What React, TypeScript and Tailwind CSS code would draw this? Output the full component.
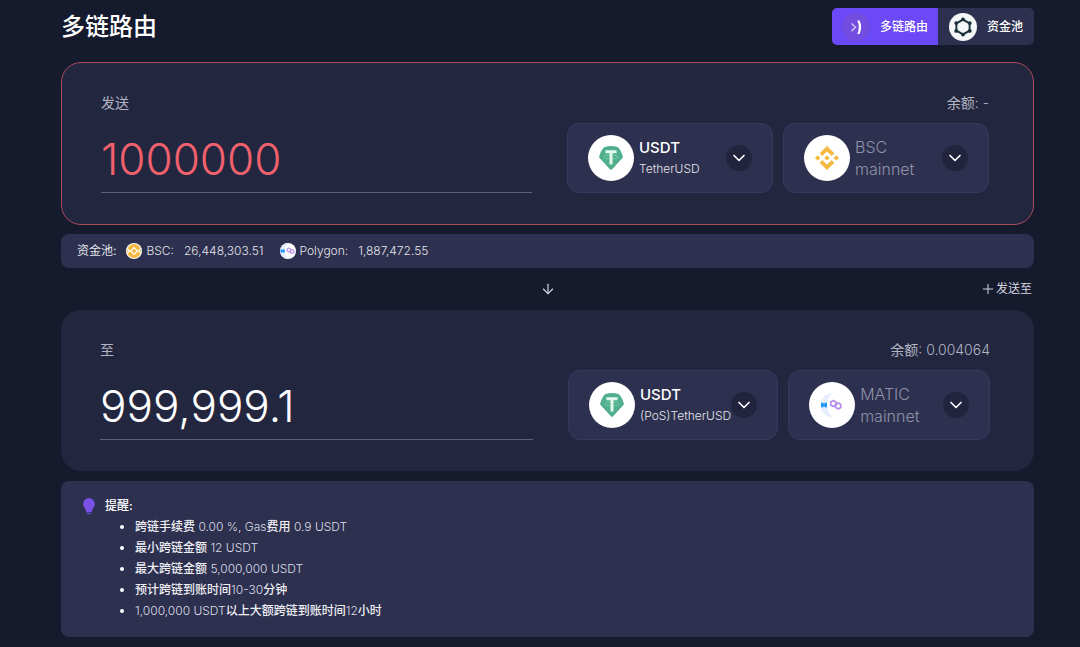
import { useState } from "react";
import type { ReactNode } from "react";
import { ArrowDown, ChevronDown, Plus } from "lucide-react";

function TetherIcon({ className }: { className?: string }) {
  return (
    <svg viewBox="0 0 24 24" className={className} aria-hidden="true">
      <path d="M5 1.2Q12 -1 19 1.2Q22.5 4.5 23.8 10.2Q24 11.4 23.2 12.3L12.9 23.4Q12 24.2 11.1 23.4L0.8 12.3Q0 11.4 0.2 10.2Q1.5 4.5 5 1.2Z" fill="#4fae8c" />
      <ellipse cx="12" cy="11" rx="7.4" ry="2" fill="none" stroke="#7fd0b4" strokeWidth="0.8" />
      <path d="M6.4 4.2h11.2v3h-4.1v11.3h-3V7.2H6.4z" fill="#e4f7ef" />
    </svg>
  );
}

function BnbIcon({ className }: { className?: string }) {
  return (
    <svg viewBox="0 0 126.6 126.6" className={className} fill="#f5b942" aria-hidden="true">
      <path d="M38.7 53.2 63.3 28.6l24.6 24.6 14.3-14.3L63.3 0 24.4 38.9z" />
      <path d="M0 63.3 14.3 49l14.3 14.3-14.3 14.3z" />
      <path d="M38.7 73.4 63.3 98l24.6-24.6 14.3 14.3-38.9 38.9-38.9-38.9z" />
      <path d="M98 63.3 112.3 49l14.3 14.3-14.3 14.3z" />
      <path d="M77.8 63.3 63.3 48.8 48.8 63.3l14.5 14.5z" />
    </svg>
  );
}

// Round badge version used in the liquidity bar
function BnbBadge() {
  return (
    <svg viewBox="0 0 16 16" className="size-4" aria-hidden="true">
      <circle cx="8" cy="8" r="8" fill="#fff" />
      <circle cx="8" cy="8" r="7" fill="#f5b942" />
      <g fill="none" stroke="#fff" strokeWidth="1.1">
        <path d="M8 4.6 11.4 8 8 11.4 4.6 8z" />
        <path d="M1 5.4 3.6 8 1 10.6M15 5.4 12.4 8l2.6 2.6" />
      </g>
    </svg>
  );
}

function MaticIcon({ className }: { className?: string }) {
  return (
    <svg viewBox="0 0 24 24" className={className} aria-hidden="true">
      <path d="M12.5 0A12 12 0 0 0 12.5 24A16 16 0 0 1 12.5 0Z" fill="#e6edff" />
      <path d="M1 9.8h6v4.4H1z" fill="#6cc3fb" />
      <path d="M1 9.8h1.6l1.4 1.6 1.4-1.6H7v4.4H5.4L4 12.8l-1.4 1.4H1z" fill="#2196f3" />
      <g fill="none" stroke="#b48be8" strokeWidth="1.7" strokeLinejoin="round">
        <path d="M13.3 7.6l2.6 1.5v3l-2.6 1.5-2.6-1.5v-3z" />
        <path d="M18.2 9.9l2.6 1.5v3l-2.6 1.5-2.6-1.5v-3z" />
      </g>
    </svg>
  );
}

function BridgeIcon() {
  return (
    <svg viewBox="0 0 28 28" className="size-7" fill="none" aria-hidden="true">
      <circle cx="14" cy="14" r="14" fill="#734ce0" />
      <path d="M9.5 10.5l4 3.8-4 3.8" stroke="#cfc3f7" strokeWidth="1.5" />
      <path d="M15.3 7.5h2.2q3.4 6.5 0 13.4h-2.2q3-6.8 0-13.4z" fill="#fff" />
    </svg>
  );
}

function PoolIcon() {
  return (
    <svg viewBox="0 0 28 28" className="size-7" fill="none" aria-hidden="true">
      <circle cx="14" cy="14" r="14" fill="#f5f6f8" />
      <path d="M14 6.6l6.6 3.7v7.4L14 21.4l-6.6-3.7v-7.4z" stroke="#17303b" strokeWidth="1.9" />
      <g fill="#17303b">
        <circle cx="14" cy="6.4" r="1.9" />
        <circle cx="20.8" cy="10.1" r="1.9" />
        <circle cx="20.8" cy="17.9" r="1.9" />
        <circle cx="14" cy="21.6" r="1.9" />
        <circle cx="7.2" cy="17.9" r="1.9" />
        <circle cx="7.2" cy="10.1" r="1.9" />
      </g>
    </svg>
  );
}

function BulbIcon() {
  return (
    <svg viewBox="0 0 12 17" className="h-[17px] w-3" fill="#7a50e6" aria-hidden="true">
      <path d="M6 0a5.8 5.8 0 0 0-5.8 5.8c0 3.2 2.4 4.6 3.2 8.4h5.2c.8-3.8 3.2-5.2 3.2-8.4A5.8 5.8 0 0 0 6 0z" />
      <path d="M3.6 15.2h4.8v.9H3.6z" />
    </svg>
  );
}

type PickerProps = {
  icon: ReactNode;
  children: ReactNode;
};

function Picker({ icon, children }: PickerProps) {
  return (
    <button
      type="button"
      aria-haspopup="dialog"
      className="flex h-[70px] items-center gap-[5px] rounded-xl border border-[#353a60] bg-[#2d304f] px-5 text-left whitespace-nowrap hover:bg-[#33375a]"
    >
      <span className="flex size-[46px] shrink-0 items-center justify-center rounded-full bg-white">{icon}</span>
      <span className="flex flex-1 flex-col">{children}</span>
      <span className="-ml-[5px] flex size-[26px] shrink-0 items-center justify-center rounded-full bg-[#21243c]">
        <ChevronDown className="size-5 text-white" strokeWidth={2} />
      </span>
    </button>
  );
}

type PanelProps = {
  id: string;
  label: string;
  value: string;
  onChange?: (value: string) => void;
  balance: string;
  token: string;
  chain: string;
  chainIcon: ReactNode;
  invalid?: boolean;
};

function Panel({ id, label, value, onChange, balance, token, chain, chainIcon, invalid }: PanelProps) {
  return (
    <section
      className={`flex gap-[35px] rounded-[20px] bg-[#23263f] pt-[30px] pr-11 pb-[31px] pl-[39px] ${
        invalid ? "border border-[#a84a5a]" : ""
      }`}
    >
      <div className="flex min-w-0 flex-1 flex-col">
        <label htmlFor={id} className="text-sm leading-5 text-[#b3b5c3]">
          {label}
        </label>
        <input
          id={id}
          value={value}
          readOnly={!onChange}
          inputMode="decimal"
          onChange={(e) => onChange?.(e.target.value)}
          className={`mt-3 h-[68px] w-full border-b border-[#5b607f] bg-transparent text-[44px] font-light outline-none ${
            invalid ? "text-[#f0616d]" : "text-white"
          }`}
        />
      </div>
      <div className="flex w-[422px] shrink-0 flex-col gap-[10px]">
        <p className="text-right text-sm leading-5 text-[#b3b5c3]">
          余额<span className="font-light">: {balance}</span>
        </p>
        <div className="grid grid-cols-[1fr_1fr] gap-[10px]">
          <Picker icon={<TetherIcon className="size-6" />}>
            <span className="text-[15px] leading-[22px] font-medium text-white">USDT</span>
            <span className="text-xs leading-5 font-light text-[#e3e4ea]">{token}</span>
          </Picker>
          <Picker icon={chainIcon}>
            <span className="text-base leading-[22px] font-light text-[#8f92a8]">{chain}</span>
            <span className="text-base leading-[22px] font-light text-[#8f92a8]">mainnet</span>
          </Picker>
        </div>
      </div>
    </section>
  );
}

// Chinese runs are set in medium, figures and units in light
function TipText({ text }: { text: string }) {
  return text.split(/([\u4e00-\u9fff]+)/).map((part, i) => (
    <span key={i} className={i % 2 ? "font-medium text-[#eeeef3]" : "font-light text-[#dcdde6]"}>
      {part}
    </span>
  ));
}

const tips = [
  "跨链手续费 0.00 %, Gas费用 0.9 USDT",
  "最小跨链金额 12 USDT",
  "最大跨链金额 5,000,000 USDT",
  "预计跨链到账时间10-30分钟",
  "1,000,000 USDT以上大额跨链到账时间12小时",
];

export default function App() {
  const [amount, setAmount] = useState("1000000");

  return (
    <div className="min-h-screen bg-[#161a2d] pr-[46px] pb-[10px] pl-[61px] font-['Inter','Noto_Sans_CJK_SC',sans-serif] text-white">
      <header className="flex items-center justify-between pt-2 pb-[17px]">
        <h1 className="text-2xl leading-8 font-medium">多链路由</h1>
        <nav className="flex h-[37px] overflow-hidden rounded-[5px] text-xs font-medium">
          <button type="button" className="flex items-center gap-[10px] bg-[#6c49f6] px-[10px]">
            <BridgeIcon />
            多链路由
          </button>
          <button type="button" className="flex items-center gap-[10px] bg-[#2d304f] px-[11px]">
            <PoolIcon />
            资金池
          </button>
        </nav>
      </header>

      <main>
        <Panel
          id="send-amount"
          label="发送"
          value={amount}
          onChange={setAmount}
          balance="-"
          token="TetherUSD"
          chain="BSC"
          chainIcon={<BnbIcon className="size-6" />}
          invalid
        />

        {/* Pool liquidity per chain */}
        <div className="mt-[9px] flex h-[34px] items-center rounded-lg bg-[#2d304f] px-4 text-xs font-light text-[#e3e4ea]">
          <span className="font-normal">资金池:</span>
          <span className="ml-[10px]">
            <BnbBadge />
          </span>
          <span className="ml-1">BSC:</span>
          <span className="ml-[10px]">26,448,303.51</span>
          <span className="ml-4 rounded-full bg-white">
            <MaticIcon className="size-4" />
          </span>
          <span className="ml-1">Polygon:</span>
          <span className="ml-[10px]">1,887,472.55</span>
        </div>

        <div className="grid h-[42px] grid-cols-[1fr_auto_1fr] items-center text-[#d5d6e0]">
          <span />
          <ArrowDown className="size-4" strokeWidth={1.75} />
          <button type="button" className="mr-[2px] flex items-center justify-self-end text-xs">
            <Plus className="size-4" strokeWidth={1.5} />
            发送至
          </button>
        </div>

        <Panel
          id="receive-amount"
          label="至"
          value="999,999.1"
          balance="0.004064"
          token="(PoS)TetherUSD"
          chain="MATIC"
          chainIcon={<MaticIcon className="size-6" />}
        />

        <section className="mt-[10px] rounded-lg bg-[#2d304f] px-[22px] pt-[15px] pb-4 text-xs">
          <h2 className="flex items-center gap-[10px] leading-5 font-medium">
            <BulbIcon />
            提醒:
          </h2>
          <ul className="list-disc pl-[52px] leading-[21px]">
            {tips.map((tip) => (
              <li key={tip}>
                <TipText text={tip} />
              </li>
            ))}
          </ul>
        </section>
      </main>
    </div>
  );
}
